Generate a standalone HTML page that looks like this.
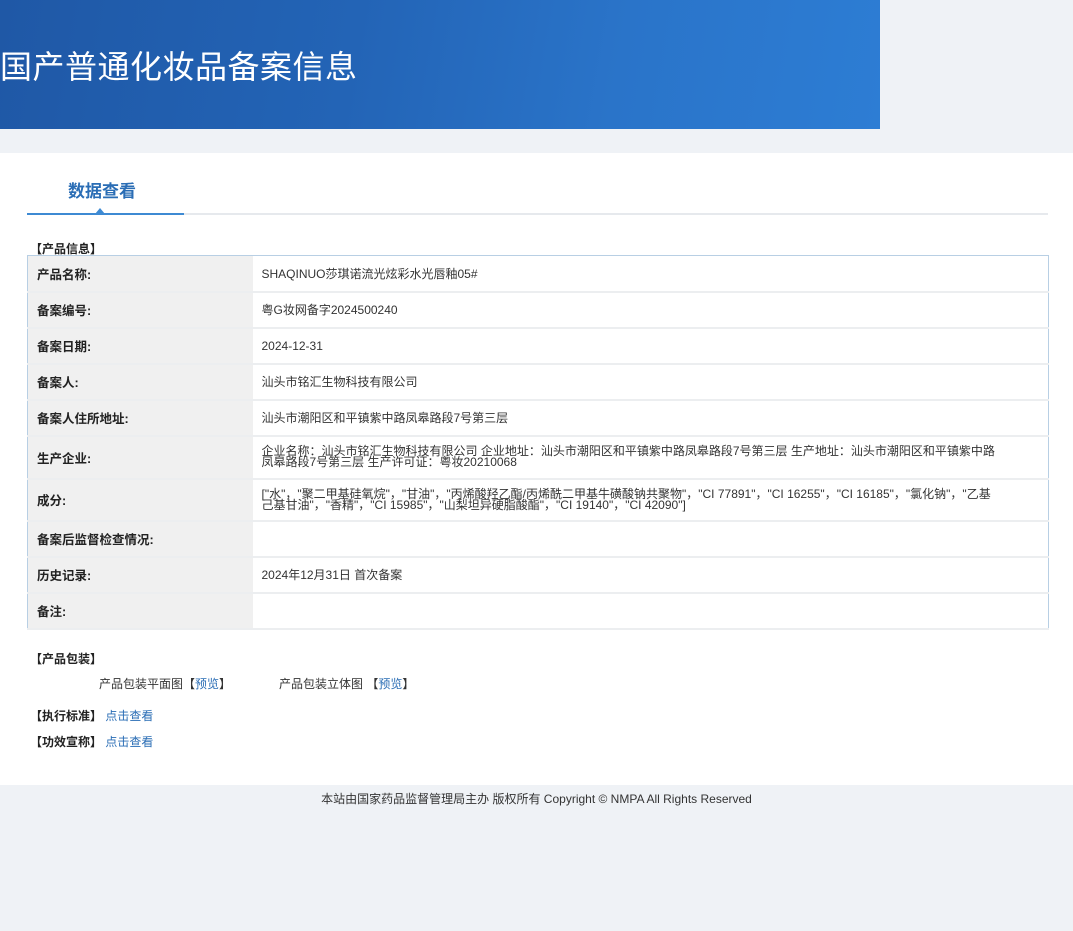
<!DOCTYPE html>
<html><head><meta charset="utf-8"><style>
*{margin:0;padding:0;box-sizing:border-box}
body{width:1073px;height:931px;background:#eff2f6;font-family:"Liberation Sans","Noto Sans CJK SC",sans-serif;position:relative;overflow:hidden}
.banner{position:absolute;left:0;top:0;width:880px;height:129px;background:linear-gradient(100deg,#1f58a6 0%,#2364b6 40%,#2a74c9 70%,#2d7dd4 100%)}
.banner h1{position:absolute;left:0;top:42px;font-size:32px;font-weight:normal;color:#fff;letter-spacing:0.5px}
.main{position:absolute;left:0;top:153px;width:1073px;height:632px;background:#fff}
.tab{position:absolute;left:68px;top:24px;font-size:17px;font-weight:bold;color:#2a6db5}
.tabline{position:absolute;left:27px;top:60px;width:1021px;height:2px;background:#e6e9ed}
.tabact{position:absolute;left:27px;top:60px;width:157px;height:2px;background:#3e8ad3}
.tri{position:absolute;left:95px;top:55px;width:0;height:0;border-left:5px solid transparent;border-right:5px solid transparent;border-bottom:6px solid #3e8ad3}
.sec{position:absolute;font-size:12px;font-weight:bold;color:#222}
table{position:absolute;left:27px;top:102px;width:1022px;border-collapse:collapse;border:1px solid #b8cfe4;font-size:12px}
td{border-bottom:2px solid #eceef0;padding:0 9px;color:#333}
td.l{width:225px;background:#f0f0f0;font-weight:bold;font-size:12.5px;color:#222}
td.v{line-height:11px}
.link{color:#2a6db5}
.t{position:absolute;font-size:12px;color:#333}
.foot{position:absolute;top:790px;left:0;width:1073px;text-align:center;font-size:12px;color:#333}
</style></head><body>
<div class="banner"><h1>国产普通化妆品备案信息</h1></div>
<div class="main">
<div class="tab">数据查看</div>
<div class="tabline"></div><div class="tabact"></div><div class="tri"></div>
<div class="sec" style="left:30px;top:87px">【产品信息】</div>
<table>
<tr style="height:36px"><td class="l">产品名称:</td><td>SHAQINUO莎琪诺流光炫彩水光唇釉05#</td></tr>
<tr style="height:36px"><td class="l">备案编号:</td><td>粤G妆网备字2024500240</td></tr>
<tr style="height:36px"><td class="l">备案日期:</td><td>2024-12-31</td></tr>
<tr style="height:36px"><td class="l">备案人:</td><td>汕头市铭汇生物科技有限公司</td></tr>
<tr style="height:36px"><td class="l">备案人住所地址:</td><td>汕头市潮阳区和平镇紫中路凤皋路段7号第三层</td></tr>
<tr style="height:43px"><td class="l">生产企业:</td><td class="v">企业名称：汕头市铭汇生物科技有限公司 企业地址：汕头市潮阳区和平镇紫中路凤皋路段7号第三层 生产地址：汕头市潮阳区和平镇紫中路<br>凤皋路段7号第三层 生产许可证：粤妆20210068</td></tr>
<tr style="height:42px"><td class="l">成分:</td><td class="v">["水"，"聚二甲基硅氧烷"，"甘油"，"丙烯酸羟乙酯/丙烯酰二甲基牛磺酸钠共聚物"，"CI 77891"，"CI 16255"，"CI 16185"，"氯化钠"，"乙基<br>己基甘油"，"香精"，"CI 15985"，"山梨坦异硬脂酸酯"，"CI 19140"，"CI 42090"]</td></tr>
<tr style="height:36px"><td class="l">备案后监督检查情况:</td><td></td></tr>
<tr style="height:36px"><td class="l">历史记录:</td><td>2024年12月31日 首次备案</td></tr>
<tr style="height:36px"><td class="l">备注:</td><td></td></tr>
</table>
<div class="sec" style="left:30px;top:497px">【产品包装】</div>
<div class="t" style="left:99px;top:522px">产品包装平面图【<span class="link">预览</span>】</div>
<div class="t" style="left:279px;top:522px">产品包装立体图 【<span class="link">预览</span>】</div>
<div class="sec" style="left:30px;top:554px">【执行标准】 <span class="link" style="font-weight:normal">点击查看</span></div>
<div class="sec" style="left:30px;top:580px">【功效宣称】 <span class="link" style="font-weight:normal">点击查看</span></div>
</div>
<div class="foot">本站由国家药品监督管理局主办 版权所有 Copyright © NMPA All Rights Reserved</div>
</body></html>
